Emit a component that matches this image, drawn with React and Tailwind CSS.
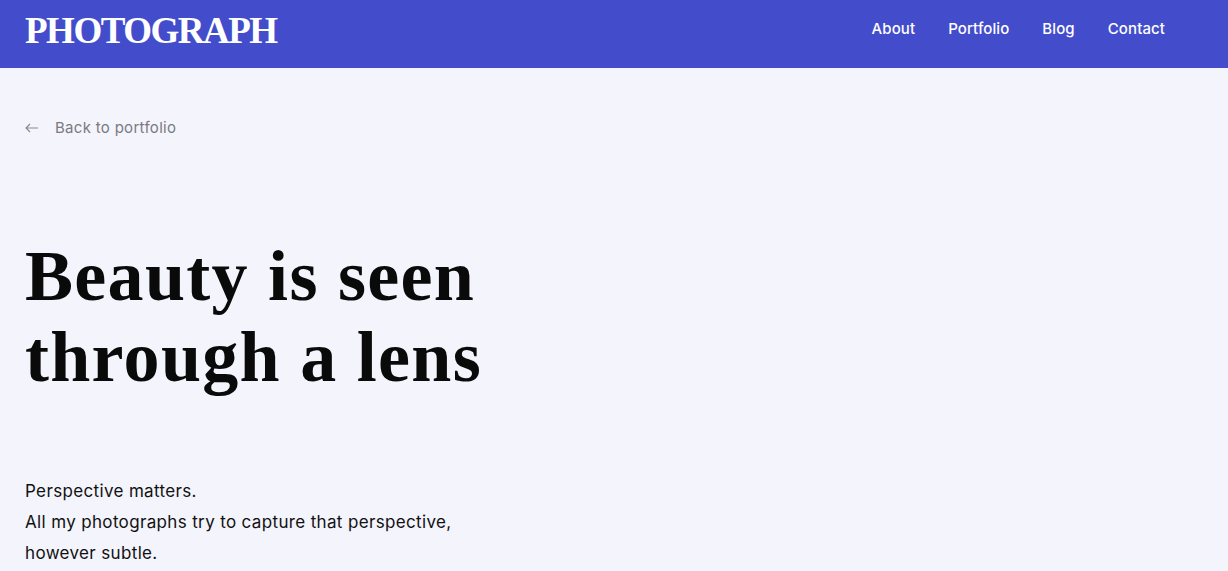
import React from "react";

export default function App() {
  const sans = { fontFamily: "Inter, 'Open Sans', sans-serif" };
  return (
    <div className="min-h-[571px] bg-[#f4f4fc]" style={sans}>
      <header className="h-[68px] bg-[#434dcc] flex items-start justify-between pl-[25px] pr-[63px] pt-[12px]">
        <div
          className="text-white text-[37px] font-bold tracking-[-1.5px] leading-[37px]"
          style={{ fontFamily: "'Liberation Serif', serif" }}
        >
          PHOTOGRAPH
        </div>
        <nav className="flex gap-[33px] text-white text-[15px] font-medium pt-[6px] tracking-[0.1px]">
          <a>About</a>
          <a>Portfolio</a>
          <a>Blog</a>
          <a>Contact</a>
        </nav>
      </header>
      <main className="px-[25px]">
        <a className="mt-[49px] flex items-center gap-[16px] text-[15px] tracking-[0.3px] text-[#7a7a80]">
          <svg width="14" height="10" viewBox="0 0 14 10" fill="none" stroke="#8a8a90" strokeWidth="1.2">
            <path d="M13 5H1M5 1L1 5l4 4" />
          </svg>
          <span>Back to portfolio</span>
        </a>
        <h1
          className="mt-[96px] text-[72px] leading-[81px] font-bold text-[#0a0a0a] tracking-[1.3px]"
          style={{ fontFamily: "'Liberation Serif', serif" }}
        >
          Beauty is seen
          <br />
          through a lens
        </h1>
        <div className="mt-[78px] text-[17px] leading-[31px] tracking-[0.35px] text-[#111]">
          <p>Perspective matters.</p>
          <p>All my photographs try to capture that perspective,</p>
          <p>however subtle.</p>
        </div>
      </main>
    </div>
  );
}
